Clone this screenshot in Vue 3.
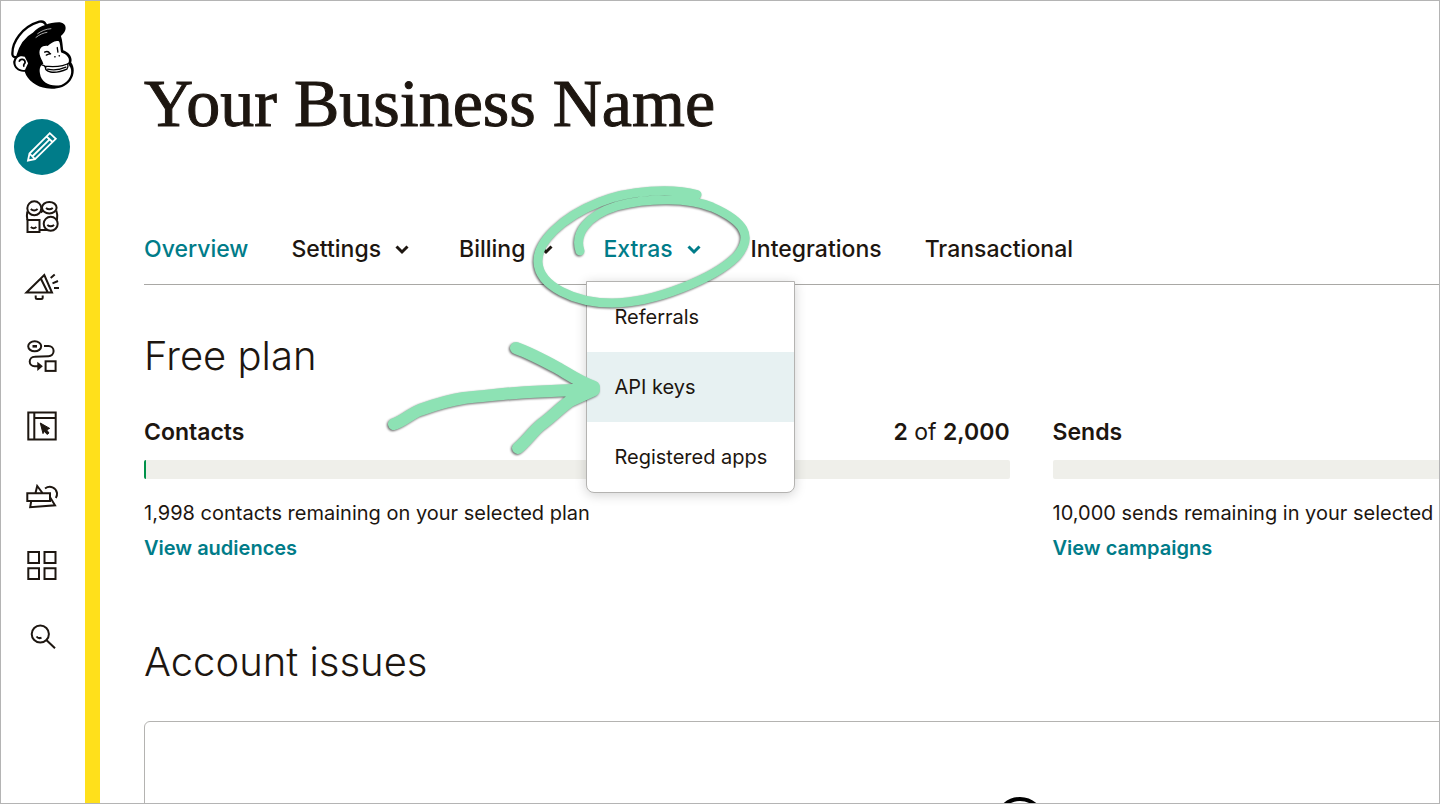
<script setup>
import { ref } from 'vue';

const tabs = [
  { label: 'Overview' },
  { label: 'Settings', menu: true },
  { label: 'Billing', menu: true },
  { label: 'Extras', menu: true, items: ['Referrals', 'API keys', 'Registered apps'] },
  { label: 'Integrations' },
  { label: 'Transactional' }
];

const openTab = ref('Extras');
const activeItem = ref('API keys');

const toggleTab = (label) => {
  openTab.value = openTab.value === label ? '' : label;
};

// percent is the filled share of the bar
const stats = [
  { title: 'Contacts', used: '2', total: '2,000', percent: 0.2, note: '1,998 contacts remaining on your selected plan', link: 'View audiences' },
  { title: 'Sends', percent: 0, note: '10,000 sends remaining in your selected plan', link: 'View campaigns' }
];
</script>

<template>
  <div class="page">
    <aside class="sidebar">
      <a href="#" class="logo" aria-label="Home">
        <svg viewBox="30 60 192 208" width="64" height="69">
          <path d="M46 168C58 132 88 108 106 98 120 78 150 66 180 67 202 70 203 92 183 108 188 122 188 138 190 151 208 158 219 172 214 188 225 202 224 226 212 242 196 264 166 270 140 266 110 262 82 242 74 216 56 218 40 206 39 186Z" />
          <path d="M37 165C34 128 66 80 118 65 128 63 136 68 139 78 124 82 110 91 101 101 80 112 60 138 51 171 44 173 38 171 37 165Z" fill="#fff" stroke="#000" stroke-width="7" />
          <path d="M112 102C122 94 138 87 154 86M107 113C120 103 130 99 142 97" fill="none" stroke="#fff" stroke-width="2" />
          <path d="M119 164C116 146 126 136 143 138 153 130 164 120 177 124 182 132 181 148 184 158 200 163 209 174 207 184 204 192 207 196 212 204 219 222 208 246 184 256 152 262 124 250 120 222 117 206 121 198 130 192 126 180 121 174 119 164Z" fill="#fff" />
          <path d="M74 171C60 165 46 174 46 189 46 203 60 213 75 210L84 190Z" fill="#fff" />
          <path d="M57 186C60 174 76 178 75 189 72 194 68 194 72 201" fill="none" stroke="#000" stroke-width="5" />
          <path d="M134 199C160 202 192 200 211 188M138 200C130 217 162 225 201 208 204 204 205 200 204 194M143 208C160 212 182 209 198 202M134 157C140 154 147 156 150 161M139 166C144 163 148 162 152 162M172 143 174 157M127 196C132 196 135 199 136 203" fill="none" stroke="#000" stroke-width="4" stroke-linecap="round" />
          <circle cx="165" cy="171" r="2.5" />
          <circle cx="178" cy="168" r="2.5" />
        </svg>
      </a>
      <nav class="side-nav" aria-label="Main">
        <a href="#" class="side-link current" aria-label="Create">
          <svg viewBox="0 0 56 56">
            <path d="M14 41.5 15.5 34.5 35.8 14.2 41.8 19.8 21 40.2ZM15.5 34.5 21 40.2M32.5 17.5 38.5 23M18.8 37 35.6 20.3" stroke-width="1.8" />
          </svg>
        </a>
        <a href="#" class="side-link" aria-label="Audience">
          <svg viewBox="0 0 56 56">
            <circle cx="20.3" cy="19.3" r="7" />
            <ellipse cx="35.3" cy="18.7" rx="7.3" ry="5.8" />
            <rect x="13.5" y="31" width="12" height="12" />
            <circle cx="36.7" cy="34.8" r="7" />
            <path d="M13.3 22.5C12.8 25 12.8 28 13.4 31M42.3 21.5C43.5 25 43.6 28 43 31M25.5 41H33M16.8 20q3.2 3 6.8 0M32 19q3.2 2.6 6.8 0M16.8 38q2.8 2.4 5.6 0M33.3 36q3.4 2.6 6.8 0M26.8 23.5 29 21.5" />
          </svg>
        </a>
        <a href="#" class="side-link" aria-label="Campaigns">
          <svg viewBox="0 0 56 56">
            <path d="M12.5 33.5 30.3 16 38 33.5ZM26.8 19.5 33.8 33.5M21.7 36.5V38.5Q21.7 40 23.2 40H27.2Q28.7 40 28.7 38.5V36.5M36.7 19 40.7 15.5M38.5 24.3 44 22M40 29H45" />
          </svg>
        </a>
        <a href="#" class="side-link" aria-label="Automations">
          <svg viewBox="0 0 56 56">
            <ellipse cx="20.7" cy="17.3" rx="6.5" ry="5" />
            <path d="M18.5 17.3H23" stroke-width="2.6" />
            <path d="M30 17H34.5A5.1 5.1 0 0 1 34.5 27.2L20.5 27.7A4.8 4.8 0 0 0 20.5 37.3H25" />
            <path d="M24.3 34.8 27.3 37.3 24.3 39.8Z" class="solid" />
            <rect x="31.6" y="32.3" width="10" height="9.6" />
          </svg>
        </a>
        <a href="#" class="side-link" aria-label="Website">
          <svg viewBox="0 0 56 56">
            <path d="M14.3 13.5H41.7V40.5H14.3ZM20.3 13.5V40.5M20.3 19H41.7" />
            <path d="M26.3 24 35.7 29.4 32.6 30.8 35 34 33 35.4 30.6 32.3 29 34.6Z" class="solid thin" />
          </svg>
        </a>
        <a href="#" class="side-link" aria-label="Content studio">
          <svg viewBox="0 0 56 56">
            <path d="M13.3 24.2H36V32H13.3ZM21.5 24 23.2 17 28.5 24M17.2 32 16.2 38.2 41 36.3 36.2 28.5M31 19.5C36 16 42 18.5 43 24Q43.3 27 41.8 29" />
          </svg>
        </a>
        <a href="#" class="side-link" aria-label="Integrations">
          <svg viewBox="0 0 56 56">
            <path d="M14.3 13H25V24H14.3ZM30.5 13H41.5V24H30.5ZM14.3 29.2H25V40H14.3ZM30.5 29.2H41.5V40H30.5Z" />
          </svg>
        </a>
        <a href="#" class="side-link" aria-label="Search">
          <svg viewBox="0 0 56 56">
            <circle cx="26.3" cy="25" r="8.6" />
            <path d="M32.6 31.2 41 39.3M22.5 27.5Q24.5 30 27.5 28.6" />
          </svg>
        </a>
      </nav>
    </aside>

    <main class="content">
      <h1>Your Business Name</h1>

      <nav class="tabs" aria-label="Account">
        <div v-for="tab in tabs" :key="tab.label" class="tab">
          <button
            v-if="tab.menu"
            type="button"
            class="tab-link"
            :class="{ active: openTab === tab.label }"
            @click="toggleTab(tab.label)"
          >
            {{ tab.label }}
            <svg class="chevron" viewBox="0 0 28 28" width="28" height="28">
              <path d="M8.5 11.5 14 17 19.5 11.5" />
            </svg>
          </button>
          <a v-else href="#" class="tab-link" :class="{ active: tab.label === 'Overview' }">{{ tab.label }}</a>

          <template v-if="tab.items && openTab === tab.label">
            <div class="menu">
              <a
                v-for="item in tab.items"
                :key="item"
                href="#"
                class="menu-item"
                :class="{ highlighted: activeItem === item }"
                @mouseenter="activeItem = item"
              >{{ item }}</a>
            </div>
            <!-- Hand-drawn marker: a loop round the tab and an arrow to the item -->
            <svg class="marker" viewBox="380 180 380 280" width="380" height="280">
              <path d="M697 194.5C672 188 630 190 600 202 562 217 537 242 538 262 539 286 575 303 612 303 655 303 715 278 737 256 754 236 744 221 712 207 690 198 650 197 617 206 588 215 574 233 580 251" stroke-width="9" />
              <path d="M394 424C402 422 410 414 420 410 434 405 450 400 464 398 485 396 510 393 530 392L594 389M516 348C530 353 545 361 558 368 570 375 580 382 594 387M518 448C526 442 534 430 542 424 552 417 560 408 570 401L594 390" stroke-width="12" />
            </svg>
          </template>
        </div>
      </nav>

      <section>
        <h2>Free plan</h2>
        <div class="stats">
          <div v-for="stat in stats" :key="stat.title" class="stat">
            <div class="stat-head">
              <h3>{{ stat.title }}</h3>
              <span v-if="stat.used"><b>{{ stat.used }}</b> of <b>{{ stat.total }}</b></span>
            </div>
            <div class="bar" role="progressbar" :aria-label="stat.title" :aria-valuenow="stat.percent">
              <div class="bar-fill" :style="{ width: stat.percent + '%' }"></div>
            </div>
            <p>{{ stat.note }}</p>
            <a href="#" class="stat-link">{{ stat.link }}</a>
          </div>
        </div>
      </section>

      <section class="issues">
        <h2>Account issues</h2>
        <div class="issues-card">
          <svg viewBox="0 0 84 60" width="84" height="60">
            <circle cx="31" cy="27" r="23" fill="none" stroke="#000" stroke-width="4" />
          </svg>
        </div>
      </section>
    </main>
  </div>
</template>

<style>
body {
  margin: 0;
}
</style>

<style scoped>
* {
  box-sizing: border-box;
}
.page {
  display: flex;
  height: 100vh;
  overflow: hidden;
  border: 1px solid #b4b4b4;
  background: #fff;
  color: #1d1610;
  font-family: Inter, "Liberation Sans", sans-serif;
  font-size: 20px;
  line-height: 35px;
}
a {
  color: inherit;
  text-decoration: none;
}
h1, h2, h3, p {
  margin: 0;
}

/* Sidebar */
.sidebar {
  flex: none;
  display: flex;
  flex-direction: column;
  align-items: center;
  width: 99px;
  padding-top: 19px;
  padding-right: 3px;
  border-right: 15px solid #ffe01b;
}
.logo {
  display: block;
  height: 99px;
}
.side-nav {
  display: flex;
  flex-direction: column;
  gap: 14px;
}
.side-link {
  width: 56px;
  height: 56px;
  border-radius: 50%;
  color: #1d1610;
}
.side-link svg {
  display: block;
  fill: none;
  stroke: currentColor;
  stroke-width: 2;
}
.side-link .solid {
  fill: currentColor;
}
.side-link .thin {
  stroke-width: 1;
}
.side-link.current {
  background: #007c89;
  color: #fff;
}

/* Content */
.content {
  flex: 1;
  min-width: 0;
  padding: 62px 0 0 44px;
}
h1 {
  font-family: "Liberation Serif", serif;
  font-size: 68px;
  font-weight: 400;
  line-height: 80px;
  white-space: nowrap;
  -webkit-text-stroke: 1px currentColor;
}
.tabs {
  display: flex;
  gap: 43px;
  margin-top: 88px;
  padding-bottom: 17px;
  border-bottom: 1px solid #a9a8a5;
}
.tab {
  position: relative;
}
.tab-link {
  display: flex;
  align-items: center;
  gap: 7px;
  padding: 0;
  border: 0;
  background: none;
  color: inherit;
  font-family: inherit;
  font-size: 23px;
  font-weight: 500;
  line-height: 36px;
  white-space: nowrap;
  cursor: pointer;
}
.tab-link.active {
  color: #007c89;
}
.chevron {
  fill: none;
  stroke: currentColor;
  stroke-width: 3;
}
.menu {
  position: absolute;
  top: 50px;
  left: -17px;
  z-index: 1;
  width: 209px;
  border: 1px solid #b4b3b1;
  border-radius: 0 0 8px 8px;
  background: #fff;
  box-shadow: 0 2px 12px rgba(0, 0, 0, 0.18);
  overflow: hidden;
}
.menu-item {
  display: block;
  padding-left: 27px;
  line-height: 70px;
  white-space: nowrap;
}
.highlighted {
  background: #e7f1f2;
}
.marker {
  position: absolute;
  top: -51px;
  left: -223px;
  z-index: 2;
  fill: none;
  stroke: #8de2b4;
  stroke-linecap: round;
  stroke-linejoin: round;
  filter: drop-shadow(-1px 1px 1px rgba(0, 0, 0, 0.6));
  pointer-events: none;
}

h2 {
  padding-top: 46px;
  font-size: 40px;
  font-weight: 300;
  line-height: 50px;
}
/* The columns run on past the right edge of the window */
.stats {
  display: grid;
  grid-template-columns: 1fr 1fr;
  gap: 43px;
  width: 137%;
  margin-top: 34px;
}
.stat-head {
  display: flex;
  justify-content: space-between;
  font-size: 23px;
}
h3, b {
  font-size: 23px;
  font-weight: 600;
}
.bar {
  height: 19px;
  margin: 10px 0 17px;
  border-radius: 2px;
  background: #efefea;
  overflow: hidden;
}
.bar-fill {
  height: 100%;
  background: #00924a;
}
.stat p {
  white-space: nowrap;
}
.stat-link {
  color: #007c89;
  font-weight: 600;
}
.issues {
  margin-top: 25px;
}
.issues-card {
  display: flex;
  justify-content: center;
  width: 137%;
  height: 320px;
  margin-top: 34px;
  padding-top: 73px;
  border: 1px solid #b4b3b1;
  border-radius: 6px;
}
</style>
